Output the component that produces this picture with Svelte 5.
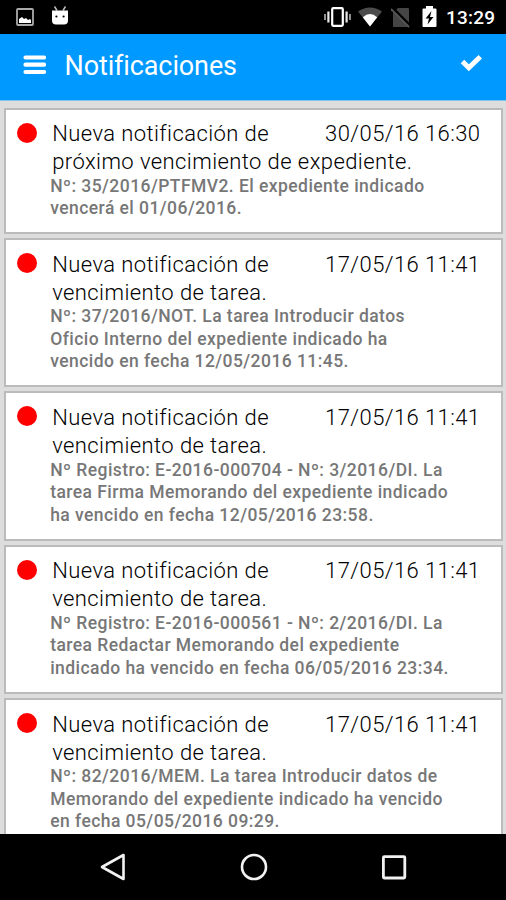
<script>
  const items = [
    { date: '30/05/16 16:30', title: ['Nueva notificación de', 'próximo vencimiento de expediente.'], detail: ['Nº: 35/2016/PTFMV2. El expediente indicado', 'vencerá el 01/06/2016.'] },
    { date: '17/05/16 11:41', title: ['Nueva notificación de', 'vencimiento de tarea.'], detail: ['Nº: 37/2016/NOT. La tarea Introducir datos', 'Oficio Interno del expediente indicado ha', 'vencido en fecha 12/05/2016 11:45.'] },
    { date: '17/05/16 11:41', title: ['Nueva notificación de', 'vencimiento de tarea.'], detail: ['Nº Registro: E-2016-000704 - Nº: 3/2016/DI. La', 'tarea Firma Memorando del expediente indicado', 'ha vencido en fecha 12/05/2016 23:58.'] },
    { date: '17/05/16 11:41', title: ['Nueva notificación de', 'vencimiento de tarea.'], detail: ['Nº Registro: E-2016-000561 - Nº: 2/2016/DI. La', 'tarea Redactar Memorando del expediente', 'indicado ha vencido en fecha 06/05/2016 23:34.'] },
    { date: '17/05/16 11:41', title: ['Nueva notificación de', 'vencimiento de tarea.'], detail: ['Nº: 82/2016/MEM. La tarea Introducir datos de', 'Memorando del expediente indicado ha vencido', 'en fecha 05/05/2016 09:29.'] }
  ];
</script>

<div class="screen">
  <div class="status">
    <svg class="picture" width="18" height="18" viewBox="0 0 18 18"><rect x="1" y="1" width="16" height="16" rx="1" fill="none" stroke="#aaa" stroke-width="1.8" /><path d="M3 15v-4l3-2 2 2 2-1 2 2 2-1 1 1v3z" fill="#fff" /></svg>
    <svg class="robot" width="18" height="21" viewBox="0 0 18 21"><path d="M3.500 1.500l2.500 4M14.500 1.500l-2.500 4" stroke="#bbb" stroke-width="1.500" /><path d="M1 5.500h16v10q0 4-4 4H5q-4 0-4-4z" fill="#fff" /><circle cx="5.400" cy="11.500" r="1.100" /><circle cx="12.600" cy="11.500" r="1.100" /></svg>
    <div class="right">
      <svg width="27" height="20" viewBox="0 0 27 20"><rect x="8.200" y="1.200" width="10.600" height="17.600" rx="1" fill="none" stroke="#fff" stroke-width="2.200" /><path d="M1 7v6M26 7v6" stroke="#aaa" stroke-width="1.700" /><path d="M4.400 4.500v11M22.600 4.500v11" stroke="#e8e8e8" stroke-width="2.200" /></svg>
      <svg class="wifi" width="24" height="20" viewBox="0 0 24 20"><path d="M0 4.500Q12-3.500 24 4.500L12 19.500z" fill="#4c4c4c" /><path d="M4.800 10.200Q12 4 19.200 10.200L12 19.500z" fill="#fff" /></svg>
      <svg class="sim" width="20" height="21" viewBox="0 0 20 21"><path d="M7 1h10q1 0 1 1v18H2V6z" fill="#454545" /><path d="M1 1l18 18" stroke="#000" stroke-width="3.500" /><path d="M0 2l18 18" stroke="#555" stroke-width="1.800" /></svg>
      <svg class="battery" width="15" height="21" viewBox="0 0 15 21"><path d="M1.500 2.500H4V0h7v2.500h2.500q1 0 1 1V20q0 1-1 1h-12q-1 0-1-1V3.500q0-1 1-1z" fill="#fff" /><path d="M9.500 5L3.600 12.500h3.400L5.500 18.500l6-7.500H8z" /></svg>
      <span class="time">13:29</span>
    </div>
  </div>
  <header>
    <svg width="24" height="20" viewBox="0 0 24 20"><path d="M3.500 2.500h18.500M3.500 9.700h18.500M3.500 17h18.500" stroke="#fff" stroke-width="4.200" stroke-linecap="round" /></svg>
    <h1>Notificaciones</h1>
    <svg class="check" width="23" height="18" viewBox="0 0 23 18"><path d="M2.500 7.500l6.300 6.200L20.300 2.800" fill="none" stroke="#fff" stroke-width="5" stroke-linejoin="miter" /></svg>
  </header>
  <main>
    {#each items as item, i}
      <article class:first={i === 0}>
        <span class="dot"></span>
        <div class="body">
          <div class="title">
            <div class="top"><span>{item.title[0]}</span><time>{item.date}</time></div>
            <div>{item.title[1]}</div>
          </div>
          <div class="detail">
            {#each item.detail as line}<div>{line}</div>{/each}
          </div>
        </div>
      </article>
    {/each}
  </main>
  <nav>
    <svg width="26" height="28" viewBox="0 0 26 28"><path d="M23.500 2v24L2 14z" fill="none" stroke="#f2f2f2" stroke-width="2.600" stroke-linejoin="round" /></svg>
    <svg width="28" height="28" viewBox="0 0 28 28"><circle cx="14" cy="14" r="12" fill="none" stroke="#f2f2f2" stroke-width="2.600" /></svg>
    <svg width="26" height="28" viewBox="0 0 26 28"><rect x="2.400" y="3.600" width="21.400" height="21.400" rx="1" fill="none" stroke="#f2f2f2" stroke-width="2.800" /></svg>
  </nav>
</div>

<style>
  :global(body) { margin: 0; }
  .screen { width: 506px; height: 900px; overflow: hidden; display: flex; flex-direction: column; background: #ddd; font-family: Roboto, sans-serif; }
  svg { display: block; flex: none; }
  .status { height: 34px; flex: none; background: #000; display: flex; box-sizing: border-box; padding: 0 10px 0 16px; }
  .picture { margin-top: 8px; }
  .robot { margin: 5px 0 0 17px; }
  .right { margin-left: auto; display: flex; padding-top: 7px; }
  .wifi { margin-left: 7px; }
  .sim { margin-left: 9px; }
  .battery { margin: -1px 0 0 11px; }
  .time { color: #fff; font-size: 19px; font-weight: 500; line-height: 22px; width: 50px; margin-left: 9px; letter-spacing: 0.2px; white-space: nowrap; }
  header { height: 67px; flex: none; box-sizing: border-box; padding: 0 23px 0 22px; background: #0099ff; border-bottom: 1px solid #83c3f0; display: flex; align-items: flex-start; }
  header > svg:first-child { margin-top: 21px; }
  h1 { margin: 16px 0 0 18.500px; color: #fff; font-size: 27px; font-weight: 400; line-height: 33px; letter-spacing: -0.120px; }
  .check { margin: 20px 0 0 auto; }
  main { flex: none; height: 733px; box-sizing: border-box; padding: 6.500px 3px 0 4px; display: flex; flex-direction: column; gap: 4px; overflow: hidden; }
  article { flex: none; height: 149.400px; box-sizing: border-box; border: 2px solid #bbb; background: #fff; display: flex; padding: 10.500px 20.500px 0 11.300px; }
  article.first { height: 126.500px; }
  .dot { flex: none; width: 20px; height: 20px; margin: 2.500px 0 0 -0.300px; border-radius: 50%; background: #f00; }
  .body { flex: 1; margin-left: 13.200px; white-space: nowrap; }
  .title { color: #000; font-size: 22px; font-weight: 300; line-height: 28px; letter-spacing: 0.420px; padding-left: 2px; }
  .top { display: flex; justify-content: space-between; }
  .detail { margin-top: -1.300px; color: #777; font-size: 17.500px; font-weight: 500; line-height: 22.500px; letter-spacing: 0.440px; }
  nav { height: 66px; flex: none; background: #000; display: flex; justify-content: space-between; padding: 19px 99px 0 100px; box-sizing: border-box; }
</style>
